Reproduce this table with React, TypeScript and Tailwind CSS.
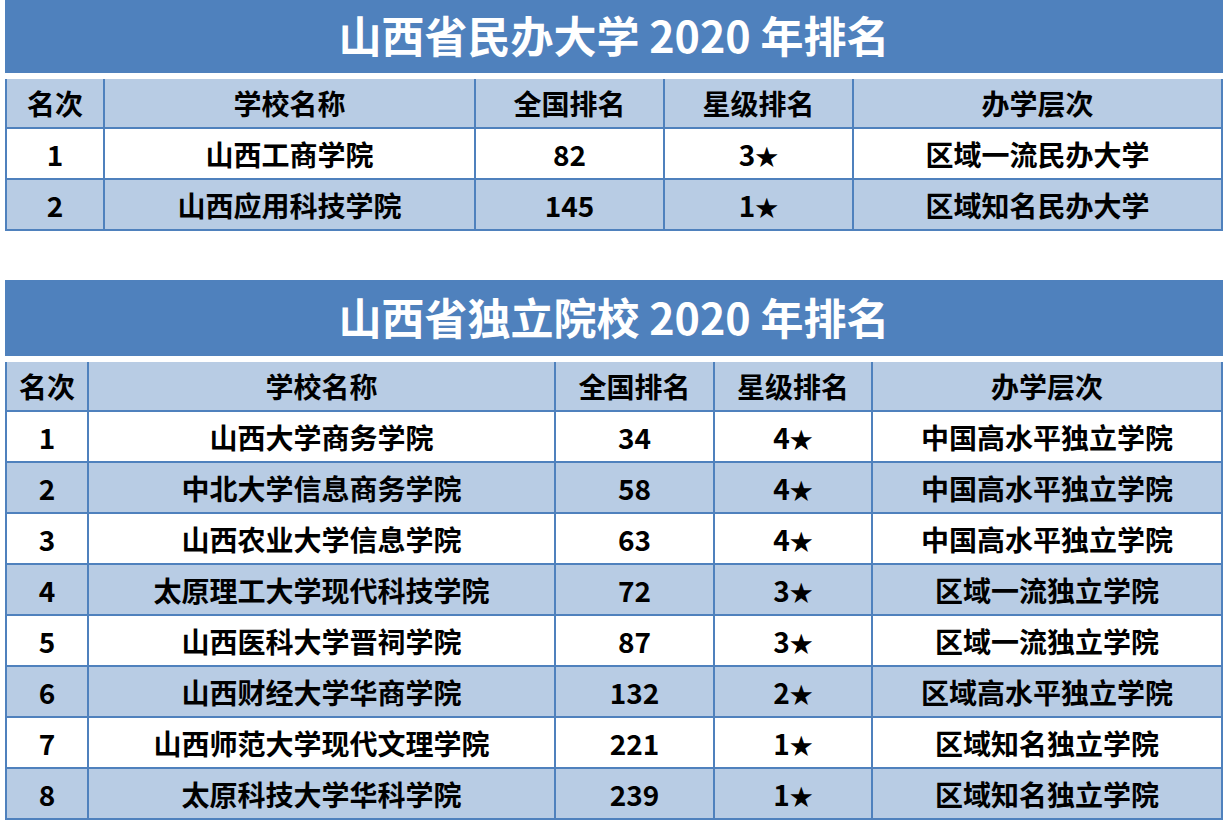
const uni = [
  { rank: "1", name: "山西工商学院", national: "82", star: "3", level: "区域一流民办大学" },
  { rank: "2", name: "山西应用科技学院", national: "145", star: "1", level: "区域知名民办大学" },
];

const indep = [
  { rank: "1", name: "山西大学商务学院", national: "34", star: "4", level: "中国高水平独立学院" },
  { rank: "2", name: "中北大学信息商务学院", national: "58", star: "4", level: "中国高水平独立学院" },
  { rank: "3", name: "山西农业大学信息学院", national: "63", star: "4", level: "中国高水平独立学院" },
  { rank: "4", name: "太原理工大学现代科技学院", national: "72", star: "3", level: "区域一流独立学院" },
  { rank: "5", name: "山西医科大学晋祠学院", national: "87", star: "3", level: "区域一流独立学院" },
  { rank: "6", name: "山西财经大学华商学院", national: "132", star: "2", level: "区域高水平独立学院" },
  { rank: "7", name: "山西师范大学现代文理学院", national: "221", star: "1", level: "区域知名独立学院" },
  { rank: "8", name: "太原科技大学华科学院", national: "239", star: "1", level: "区域知名独立学院" },
];

type Row = { rank: string; name: string; national: string; star: string; level: string };

function RankTable({
  title,
  rows,
  widths,
  titleHeight,
}: {
  title: string;
  rows: Row[];
  widths: number[];
  titleHeight: string;
}) {
  const headers = ["名次", "学校名称", "全国排名", "星级排名", "办学层次"];
  return (
    <div className="w-[1218px]">
      <div
        className={`${titleHeight} bg-[#4f81bd] flex items-center justify-center pb-[4px] text-white text-[43px] font-bold leading-none`}
      >
        {title}
      </div>
      <div className="h-[6px] bg-white" />
      <table className="table-fixed border-collapse w-[1216px] text-[28px] font-bold text-black leading-none">
        <colgroup>
          {widths.map((w, i) => (
            <col key={i} style={{ width: w }} />
          ))}
        </colgroup>
        <thead>
          <tr className="h-[49px] bg-[#b8cce4]">
            {headers.map((h) => (
              <th key={h} className="border-2 border-[#4f81bd] border-t-0 text-center font-bold p-0">
                {h}
              </th>
            ))}
          </tr>
        </thead>
        <tbody>
          {rows.map((r, i) => (
            <tr key={r.rank} className={`h-[51px] ${i % 2 === 0 ? "bg-white" : "bg-[#b8cce4]"}`}>
              <td className="border-2 border-[#4f81bd] text-center p-0">{r.rank}</td>
              <td className="border-2 border-[#4f81bd] text-center p-0">{r.name}</td>
              <td className="border-2 border-[#4f81bd] text-center p-0">{r.national}</td>
              <td className="border-2 border-[#4f81bd] text-center p-0">
                {r.star}
                <span className="text-[23px] align-[1px]">★</span>
              </td>
              <td className="border-2 border-[#4f81bd] text-center p-0">{r.level}</td>
            </tr>
          ))}
        </tbody>
      </table>
    </div>
  );
}

export default function App() {
  return (
    <div className="w-[1226px] h-[820px] bg-white pl-[5px] overflow-hidden font-['Noto_Sans_CJK_SC',sans-serif]">
      <RankTable
        title="山西省民办大学 2020 年排名"
        rows={uni}
        widths={[98, 371, 189, 189, 369]}
        titleHeight="h-[73px]"
      />
      <div className="h-[49px]" />
      <RankTable
        title="山西省独立院校 2020 年排名"
        rows={indep}
        widths={[82, 467, 159, 158, 350]}
        titleHeight="h-[76px]"
      />
    </div>
  );
}
